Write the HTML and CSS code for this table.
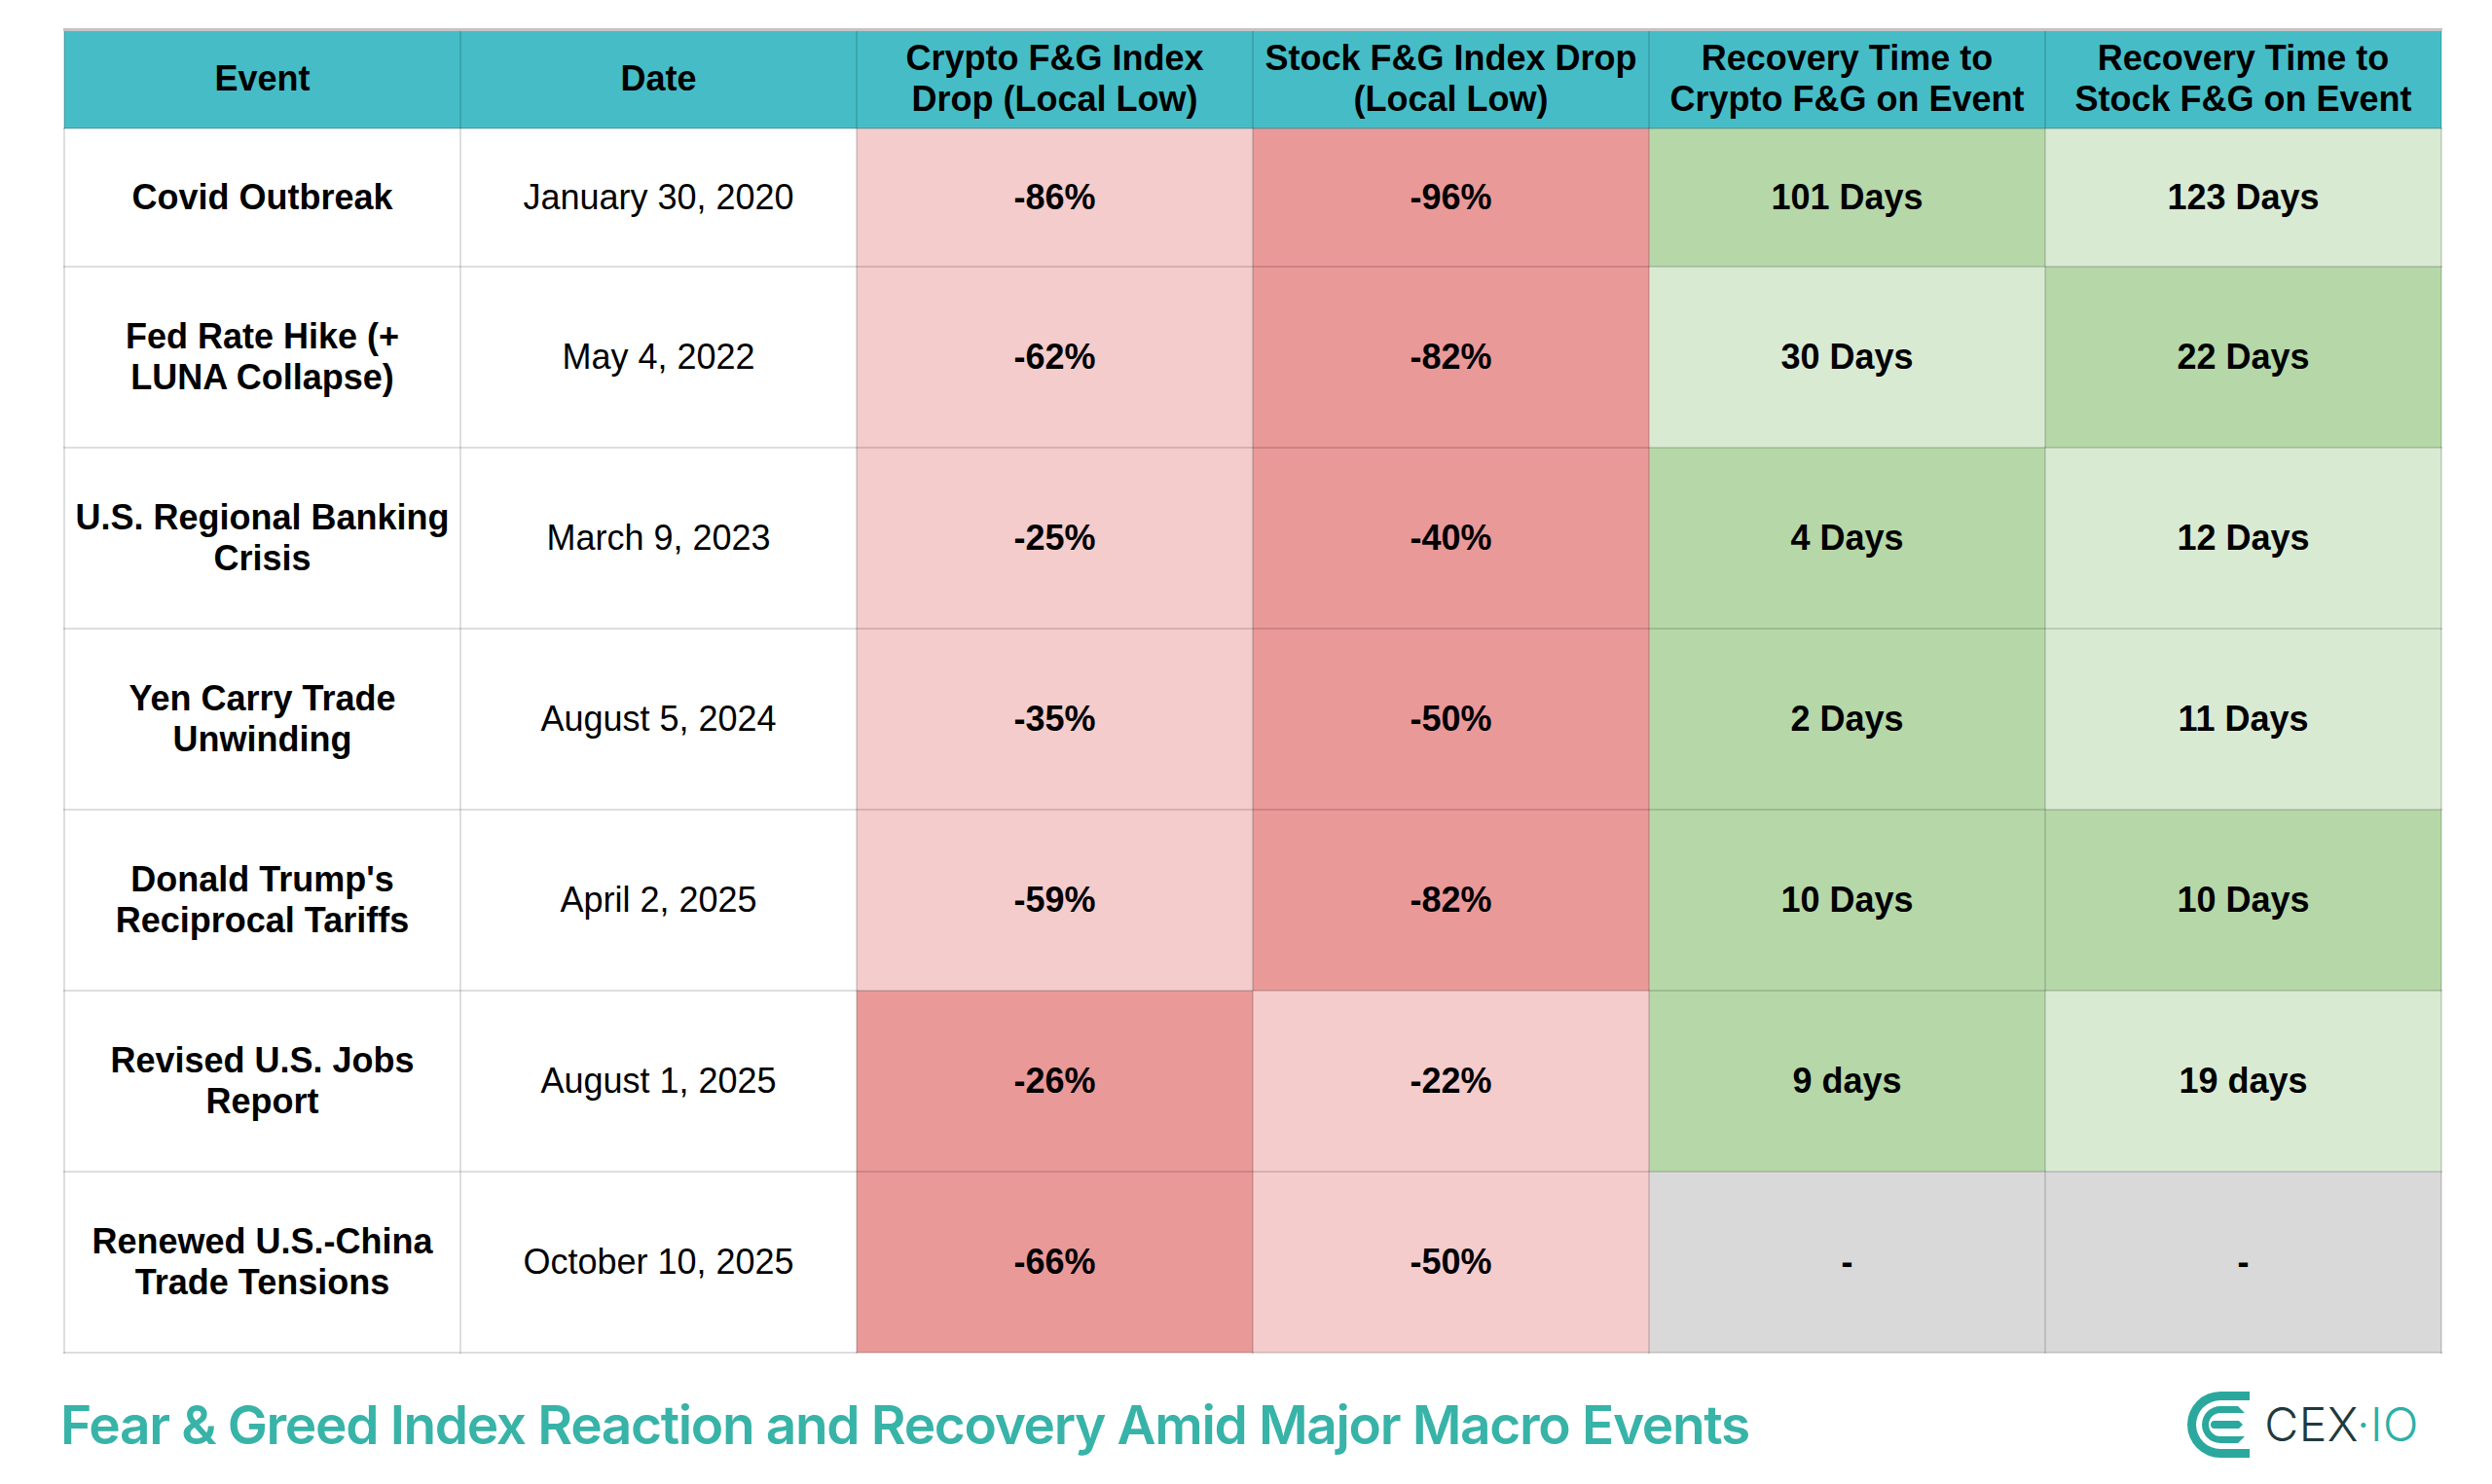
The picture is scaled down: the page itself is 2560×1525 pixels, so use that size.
FILE: index.html
```
<!DOCTYPE html>
<html lang="en">
<head>
<meta charset="utf-8">
<title>Fear &amp; Greed Index Reaction and Recovery Amid Major Macro Events</title>
<link rel="stylesheet" href="styles.css">
</head>
<body>
<div class="page">
  <table class="fg">
    <colgroup>
      <col><col><col><col><col><col>
    </colgroup>
    <thead>
      <tr class="head">
        <th>Event</th>
        <th>Date</th>
        <th>Crypto F&amp;G Index<br>Drop (Local Low)</th>
        <th>Stock F&amp;G Index Drop<br>(Local Low)</th>
        <th>Recovery Time to<br>Crypto F&amp;G on Event</th>
        <th>Recovery Time to<br>Stock F&amp;G on Event</th>
      </tr>
    </thead>
    <tbody>
      <tr class="short">
        <td>Covid Outbreak</td>
        <td class="date">January 30, 2020</td>
        <td class="pink">-86%</td>
        <td class="red">-96%</td>
        <td class="green">101 Days</td>
        <td class="lgreen">123 Days</td>
      </tr>
      <tr class="tall">
        <td>Fed Rate Hike (+<br>LUNA Collapse)</td>
        <td class="date">May 4, 2022</td>
        <td class="pink">-62%</td>
        <td class="red">-82%</td>
        <td class="lgreen">30 Days</td>
        <td class="green">22 Days</td>
      </tr>
      <tr class="tall">
        <td>U.S. Regional Banking<br>Crisis</td>
        <td class="date">March 9, 2023</td>
        <td class="pink">-25%</td>
        <td class="red">-40%</td>
        <td class="green">4 Days</td>
        <td class="lgreen">12 Days</td>
      </tr>
      <tr class="tall">
        <td>Yen Carry Trade<br>Unwinding</td>
        <td class="date">August 5, 2024</td>
        <td class="pink">-35%</td>
        <td class="red">-50%</td>
        <td class="green">2 Days</td>
        <td class="lgreen">11 Days</td>
      </tr>
      <tr class="tall">
        <td>Donald Trump's<br>Reciprocal Tariffs</td>
        <td class="date">April 2, 2025</td>
        <td class="pink">-59%</td>
        <td class="red">-82%</td>
        <td class="green">10 Days</td>
        <td class="green">10 Days</td>
      </tr>
      <tr class="tall">
        <td>Revised U.S. Jobs<br>Report</td>
        <td class="date">August 1, 2025</td>
        <td class="red">-26%</td>
        <td class="pink">-22%</td>
        <td class="green">9 days</td>
        <td class="lgreen">19 days</td>
      </tr>
      <tr class="tall">
        <td>Renewed U.S.-China<br>Trade Tensions</td>
        <td class="date">October 10, 2025</td>
        <td class="red">-66%</td>
        <td class="pink">-50%</td>
        <td class="gray">-</td>
        <td class="gray">-</td>
      </tr>
    </tbody>
  </table>

  <div class="foot">
    <h1 class="title">Fear &amp; Greed Index Reaction and Recovery Amid Major Macro Events</h1>
    <div class="logo">
      <svg class="logo-mark" width="64" height="68" viewBox="0 0 64 68" aria-hidden="true">
        <path fill="#2aa89e" d="M64 0 H34 A34 34 0 0 0 34 68 H64 V59 H34 A25 25 0 0 1 34 9 H64 Z"/>
        <path fill="#2aa89e" d="M34 15 H52 L59 22 H34 A12 12 0 0 0 34 46 H59 L52 53 H34 A19 19 0 0 1 34 15 Z"/>
        <path fill="#2aa89e" d="M28 30 H53 L57 34 L53 38 H28 A4 4 0 0 1 28 30 Z"/>
      </svg>
      <span class="logo-text">CEX<span class="io">·IO</span></span>
    </div>
  </div>
</div>
</body>
</html>
```
FILE: styles.css
```
* {
  box-sizing: border-box;
}

html, body {
  margin: 0;
  padding: 0;
  background: #ffffff;
}

body {
  font-family: "Liberation Sans", Arial, sans-serif;
  color: #000000;
}

.page {
  width: 2560px;
  height: 1525px;
  padding: 29px 0 0 65px;
  overflow: hidden;
}

.fg {
  border-collapse: collapse;
  table-layout: fixed;
  width: 2444px;
}

.fg col {
  width: 407px;
}

.fg th,
.fg td {
  border: 2px solid rgba(0, 0, 0, 0.13);
  padding: 0 4px;
  text-align: center;
  vertical-align: middle;
  font-size: 36px;
  line-height: 42px;
  font-weight: 700;
  white-space: nowrap;
  color: #000000;
}

.fg thead th {
  background: #46bdc6;
  border-top: 3px solid #c4c4c4;
}

.head {
  height: 101px;
}

.short {
  height: 142px;
}

.tall {
  height: 186px;
}

.fg td.date {
  font-weight: 400;
}

.pink {
  background: #f4cccc;
}

.red {
  background: #ea9999;
}

.green {
  background: #b6d7a8;
}

.lgreen {
  background: #d9ead3;
}

.gray {
  background: #d9d9d9;
}

.foot {
  display: flex;
  align-items: center;
  justify-content: space-between;
  width: 2423px;
  margin: 39px 0 0 -3px;
}

.title {
  margin: 0;
  font-family: Inter, "Noto Sans", sans-serif;
  font-size: 55px;
  line-height: 66px;
  font-weight: 600;
  color: #38b3a8;
  letter-spacing: -1.35px;
  white-space: nowrap;
}

.logo {
  display: flex;
  align-items: center;
  gap: 15px;
}

.logo-mark {
  display: block;
}

.logo-text {
  font-family: Inter, "Noto Sans", sans-serif;
  font-size: 48px;
  line-height: 1;
  font-weight: 300;
  color: #1f3a3d;
  letter-spacing: 0.5px;
}

.logo-text .io {
  color: #2bb0a8;
}
```
